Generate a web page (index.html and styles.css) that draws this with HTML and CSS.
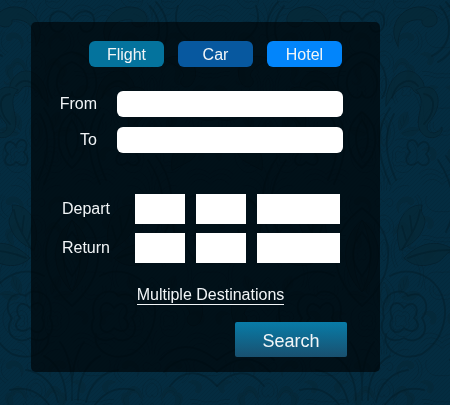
FILE: index.html
```html
<!DOCTYPE html>
<html lang="en">
<head>
<meta charset="utf-8">
<title>Travel search</title>
<link rel="stylesheet" href="styles.css">
</head>
<body>
<svg class="wallpaper" aria-hidden="true">
  <defs>
    <g id="half" fill="none" stroke-linecap="round">
      <g class="leaf">
        <path d="M24 106C22 76 48 58 61 82C66 94 54 98 50 88C42 82 32 92 24 106Z"/>
        <path d="M54 90C76 78 84 104 67 122C60 132 74 138 80 127C82 139 62 143 57 128C53 115 66 101 54 90Z"/>
        <path d="M36 46C20 20 52 -4 72 12C84 28 58 32 60 20C42 18 36 30 36 46Z"/>
        <path d="M38 250C30 226 42 204 60 205C57 216 66 216 62 226C58 240 46 246 38 250Z"/>
        <path d="M42 258C60 240 78 240 92 250C80 254 82 262 70 264C58 268 48 264 42 258Z"/>
        <path d="M0 220C22 238 22 270 0 292C12 268 10 240 0 220Z"/>
        <path d="M92 60C112 48 132 66 120 84C112 92 104 82 112 76C110 66 100 64 92 60Z"/>
        <path d="M96 300C118 282 138 300 128 322C120 332 110 320 118 314C116 304 106 300 96 300Z"/>
        <path d="M100 170C96 144 118 130 136 144C122 148 126 158 116 162Z"/>
      </g>
      <g class="line">
        <path d="M0 208C36 234 34 276 0 306M0 232C12 246 12 262 0 276"/>
        <path d="M28 276C46 266 66 274 76 288C90 310 82 340 60 354C40 362 20 350 24 334"/>
        <path d="M28 184C14 154 14 128 28 108M34 180C22 154 22 132 32 114"/>
        <path d="M30 98C34 82 48 76 56 86M62 94C76 96 72 114 62 124"/>
        <path d="M40 250C48 236 56 226 58 210M44 240L40 226M50 232L48 216M46 258C60 252 74 250 88 250"/>
        <path d="M30 318C24 304 36 298 42 308C50 298 60 308 52 318C62 326 52 336 42 328C34 338 24 328 30 318Z"/>
        <path d="M22 318C16 292 40 286 46 296C62 288 70 308 60 318C70 334 54 346 42 338C28 346 14 332 22 318Z"/>
        <path d="M0 400C-2 374 4 352 12 342M6 400C6 378 16 362 28 356M14 402C18 384 30 372 46 370M22 406C32 392 46 386 62 390"/>
        <path d="M0 62C12 66 18 78 14 90C10 100 0 100 0 92M0 52C22 56 30 82 20 98"/>
        <path d="M48 152C40 142 52 134 56 146C62 136 72 146 64 154C72 162 62 170 56 162C46 170 40 160 48 152Z"/>
        <path d="M76 160C92 184 96 210 84 232M84 156C102 180 104 210 92 236M104 240C94 206 112 190 145 196"/>
        <path d="M78 6C92 22 90 46 70 56M84 2C102 22 98 50 76 62M106 6C98 30 116 48 145 44"/>
        <path d="M96 104C116 100 130 116 145 108M100 114C116 110 130 126 145 118M116 230C108 250 126 270 145 262M124 230C118 246 130 258 145 252"/>
        <path d="M88 360C104 342 124 344 145 360M92 372C108 354 126 356 145 372M98 386C112 368 130 370 145 386"/>
        <path d="M0 120C8 130 8 146 0 158M0 112C18 126 18 152 0 168M0 20C10 6 24 10 22 24C20 34 10 34 8 26"/>
      </g>
    </g>
    <pattern id="damask" x="72" y="0" width="290" height="410" patternUnits="userSpaceOnUse">
      <use href="#half"/>
      <use href="#half" transform="translate(290 0) scale(-1 1)"/>
    </pattern>
    <pattern id="filigree" x="36" y="30" width="116" height="164" patternUnits="userSpaceOnUse">
      <use href="#half" transform="scale(0.4)"/>
      <use href="#half" transform="translate(116 0) scale(-0.4 0.4)"/>
    </pattern>
    <pattern id="weave" width="4" height="4" patternUnits="userSpaceOnUse">
      <path class="thread" d="M0 4L4 0"/>
    </pattern>
  </defs>
  <rect width="100%" height="100%" fill="url(#weave)"/>
  <rect class="fine" width="100%" height="100%" fill="url(#filigree)"/>
  <rect width="100%" height="100%" fill="url(#damask)"/>
</svg>

<main class="panel">
  <form class="search">
    <div class="tabs">
      <button type="button" class="tab tab-flight">Flight</button>
      <button type="button" class="tab tab-car">Car</button>
      <button type="button" class="tab tab-hotel">Hotel</button>
    </div>
    <div class="places">
      <div class="place">
        <label for="from">From</label>
        <input id="from" type="text">
      </div>
      <div class="place">
        <label for="to">To</label>
        <input id="to" type="text">
      </div>
    </div>
    <div class="dates">
      <div class="date">
        <label for="depart-day">Depart</label>
        <div class="parts">
          <input id="depart-day" type="text">
          <input type="text" aria-label="Depart month">
          <input type="text" aria-label="Depart year">
        </div>
      </div>
      <div class="date">
        <label for="return-day">Return</label>
        <div class="parts">
          <input id="return-day" type="text">
          <input type="text" aria-label="Return month">
          <input type="text" aria-label="Return year">
        </div>
      </div>
    </div>
    <a class="multiple" href="#">Multiple Destinations</a>
    <button type="submit" class="submit">Search</button>
  </form>
</main>
</body>
</html>
```
FILE: styles.css
```css
* {
  box-sizing: border-box;
}

body {
  margin: 0;
  padding: 22px 70px 32px 31px;
  background: #042c40;
  color: #f1f5f7;
  font: 16px/20px "Liberation Sans", Arial, sans-serif;
}

.wallpaper {
  position: fixed;
  inset: 0;
  z-index: -1;
  width: 100%;
  height: 100%;
}

.leaf {
  fill: #052736;
  stroke: #021c28;
  stroke-width: 1;
  opacity: 0.7;
}

.line {
  stroke: #021c28;
  stroke-width: 2;
  opacity: 0.5;
}

.fine {
  opacity: 0.8;
}

.thread {
  stroke: #032435;
  stroke-width: 1;
  opacity: 0.35;
}

.panel {
  padding: 19px 0 15px;
  border-radius: 5px;
  background: rgba(0, 5, 7, 0.68);
}

.search {
  display: flex;
  flex-direction: column;
}

button,
input {
  margin: 0;
  padding: 0;
  border: 0;
  font: inherit;
}

button {
  padding-top: 2px;
  color: #f1f5f7;
}

.tabs {
  display: grid;
  grid-template-columns: repeat(3, 1fr);
  gap: 14px;
  margin: 0 38px 24px 58px;
}

.tab {
  height: 26px;
  border-radius: 6px;
}

.tab-flight {
  background: #04739d;
}

.tab-car {
  background: #07589f;
}

.tab-hotel {
  background: #0285fb;
}

.places {
  display: grid;
  gap: 10px;
  margin-right: 37px;
}

.place {
  display: grid;
  grid-template-columns: 66px 1fr;
  gap: 20px;
  align-items: center;
}

.place label,
.date label {
  text-align: right;
}

input {
  width: 100%;
  min-width: 0;
  background: #fff;
}

.place input {
  height: 26px;
  padding: 0 8px;
  border-radius: 6px;
}

.dates {
  display: grid;
  gap: 9px;
  margin: 41px 40px 23px 0;
}

.date {
  display: grid;
  grid-template-columns: 79px 1fr;
  gap: 25px;
  align-items: center;
}

.parts {
  display: grid;
  grid-template-columns: 50fr 50fr 83fr;
  gap: 11px;
}

.parts input {
  height: 30px;
  padding: 0 6px;
}

.multiple {
  align-self: center;
  margin: 0 0 17px 10px;
  border-bottom: 1px solid #f1f5f7;
  color: inherit;
  line-height: 18px;
  text-decoration: none;
}

.submit {
  align-self: flex-end;
  width: 112px;
  height: 35px;
  margin-right: 33px;
  border-radius: 2px;
  background: linear-gradient(#087ca8, #19506f);
  font-size: 18px;
}
```
